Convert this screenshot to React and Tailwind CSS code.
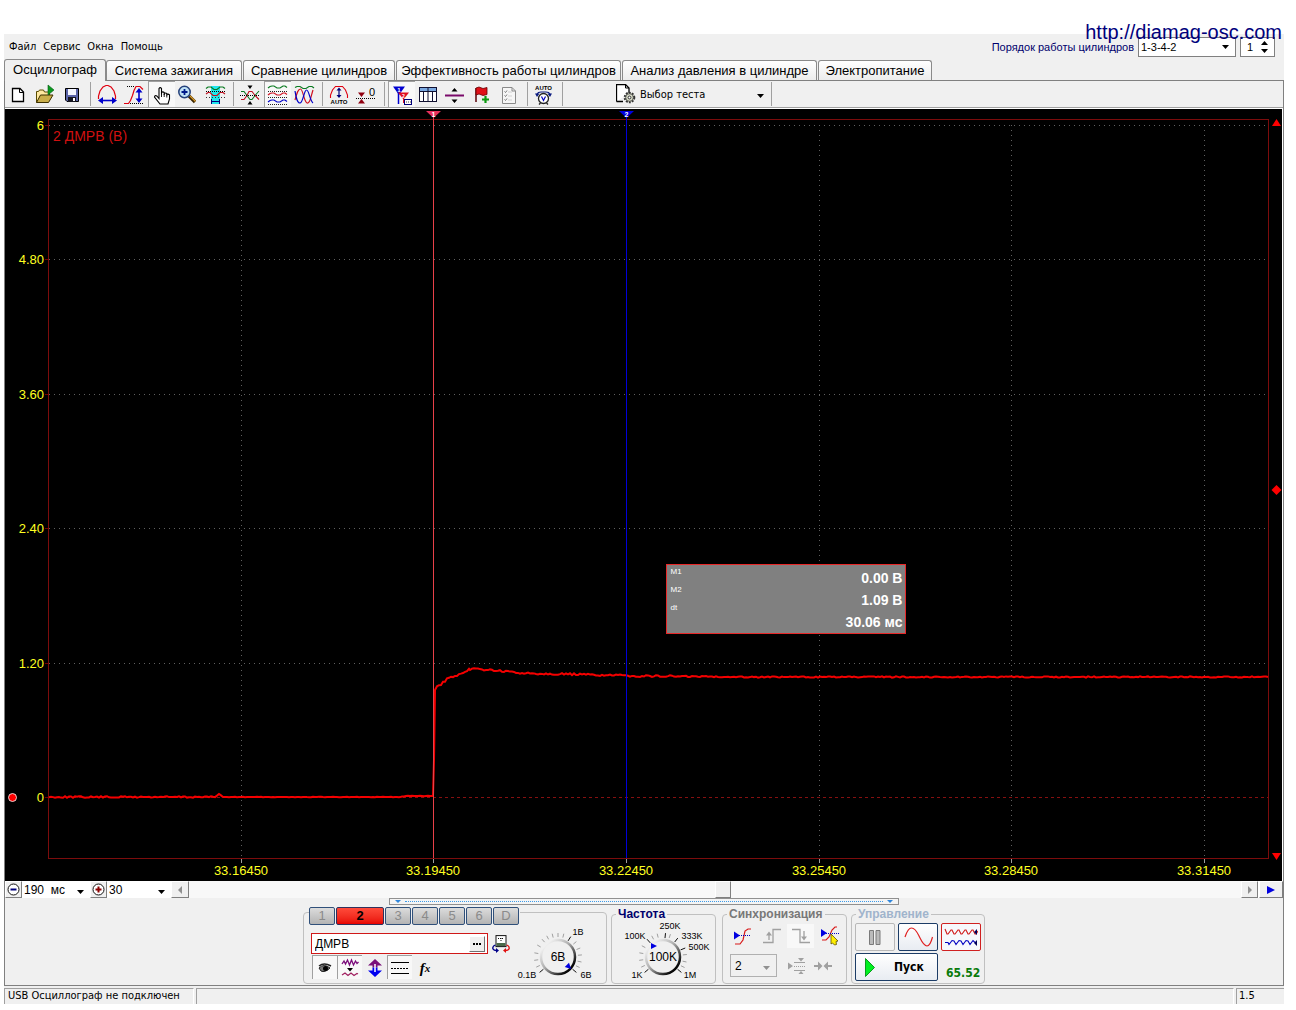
import React from "react";

const cx = (...parts) => parts.filter(Boolean).join(" ");

/* ---------- toolbar glyphs (25 x 24 grid) ---------- */

function Glyph({ children, className = "h-6 w-[25px]", box = "0 0 25 24" }) {
  return (
    <svg className={cx("block shrink-0", className)} viewBox={box} fill="none" aria-hidden="true">
      {children}
    </svg>
  );
}

const NewFile = () => (
  <Glyph>
    <path d="M6.5 5.5h7.500l3.500 3.500v9.500h-11z" fill="#fff" stroke="#000" strokeWidth="1.300" />
    <path d="M13.500 5.500v4h4" stroke="#000" />
  </Glyph>
);

const OpenFile = () => (
  <Glyph>
    <path d="M3.5 19.500V8.500h2l1-1.500h4l1 2h5v3" fill="#ffe9a0" stroke="#5a4a00" />
    <path d="M3.500 19.500l4-7.500h12.500l-4.500 7.500z" fill="#c9ae4a" stroke="#3c3000" />
    <path d="M15 2l6 5-6 5z" fill="#0a9a20" stroke="#065a12" strokeWidth=".6" />
  </Glyph>
);

const SaveFile = () => (
  <Glyph>
    <path d="M5.500 5.500h13v13h-11.500l-1.500-1.500z" fill="#5a64a8" stroke="#000" />
    <rect x="8" y="6" width="8" height="6" fill="#f4f6ff" />
    <rect x="8" y="14" width="8" height="5" fill="#15151f" />
    <rect x="13" y="15" width="2" height="3" fill="#fff" />
  </Glyph>
);

const FitWidth = () => (
  <Glyph>
    <path d="M3.500 16v-3l1.500-5 3-4 3-1.500h2l3 1.500 3 4 1.500 5v3" stroke="#e00010" strokeWidth="1.200" />
    <path d="M6 17.500h13" stroke="#00c" strokeWidth="1.600" />
    <path d="M3 17.500l5-3.500v7zM22 17.500l-5-3.500v7z" fill="#00c" />
  </Glyph>
);

const FitHeight = () => (
  <Glyph>
    <path d="M2 20.500h4.500l2-3 2-5 1.500-5 2-4h4l3 3" stroke="#e00010" strokeWidth="1.200" />
    <path d="M5 3.500h8M8 20.500h13" stroke="#000" strokeDasharray="1 1" />
    <path d="M17 7v11" stroke="#00c" strokeWidth="1.600" />
    <path d="M17 5l-3.500 4.500h7zM17 20l-3.500-4.500h7z" fill="#00c" />
  </Glyph>
);

const Hand = () => (
  <Glyph>
    <path
      d="M10 15.500V5.500q1.200-1.700 2.500 0v6-2q1.200-1.200 2.700 0v2.500-1.500q1.300-1 2.600 0v2-1q1.400-1 2.700.300v4.200l-1.500 5H11l-5.500-7q.3-2 2.300-1z"
      fill="#fff"
      stroke="#000"
      strokeWidth="1.100"
    />
    <path d="M12.500 10v4M15.200 11v3M17.800 12v2.500" stroke="#000" strokeWidth=".9" />
  </Glyph>
);

const Zoom = () => (
  <Glyph>
    <path d="M13 13l6 6" stroke="#3a2500" strokeWidth="3.200" />
    <path d="M14 13l5.500 5.500" stroke="#d89a2a" strokeWidth="1.200" />
    <circle cx="8.500" cy="9" r="5.700" fill="#bfe2f6" stroke="#24407a" strokeWidth="1.500" />
    <path d="M5.500 9h6M8.500 6v6" stroke="#001a8a" strokeWidth="1.800" />
  </Glyph>
);

const CyanZone = () => (
  <Glyph>
    <rect x="8" y="3" width="9" height="18" fill="#1fe6ee" />
    <path d="M3 5.500l2-1.500h3l3 2.500h3L17 4h3l2 1.500" stroke="#0a7a20" strokeWidth="1.200" />
    <path d="M3 11l2-1.500h2l3 3h4l3-3h3l2 1.500" stroke="#c01020" strokeWidth="1.200" />
    <path d="M3 8.500h19" stroke="#000" strokeDasharray="1 1" />
    <path d="M3 14.500h19" stroke="#333" strokeDasharray="1 2" />
    <path d="M8.500 16v5M16.500 16v5M9 18.500h7" stroke="#00007a" />
  </Glyph>
);

const Crossing = () => (
  <Glyph>
    <path d="M9.500 2.500h5L12 6zM9.500 21.500h5L12 18z" fill="#000" />
    <path d="M3 8.500h3l3 4 3 4h2l3-4 4-4.500" stroke="#0a7a20" strokeWidth="1.100" />
    <path d="M3 16.500h3l3-4 2-4h3l3 4 4 4" stroke="#c01020" strokeWidth="1.100" />
    <path d="M2 12.500h20" stroke="#000" strokeDasharray="1 1" />
  </Glyph>
);

const wave = (y) => `M3 ${y + 2}l2-1.500 2-.500h2l3 2h3l3-2h2l2 1.500`;
const ThreeWaves = () => (
  <Glyph>
    <path d={wave(3)} stroke="#0a7a20" strokeWidth="1.200" />
    <path d={wave(10)} stroke="#d01020" strokeWidth="1.200" />
    <path d={wave(17)} stroke="#0000c8" strokeWidth="1.200" />
    <path d="M3 8.500h19M3 14.500h19M3 21.500h19" stroke="#222" strokeDasharray="1 1" />
  </Glyph>
);

const OverlaidWaves = () => (
  <Glyph>
    <path d="M3 4.500l2-1h3l3 2h3l3-2h3l2 1.500" stroke="#0a7a20" strokeWidth="1.200" />
    <path d="M3 17C5 10 6 6 8.500 6S12 19 15 20s4-7 6-13" stroke="#d01020" strokeWidth="1.200" />
    <path d="M3 8c1 6 2 12 5 12S12 7 14.500 7 18 18 21 20" stroke="#0000c8" strokeWidth="1.200" />
  </Glyph>
);

const AutoFit = () => (
  <Glyph>
    <path d="M3.500 15v-3l2-5 3-3.500h7l3 3.500 2 5v3" stroke="#e00010" strokeWidth="1.100" />
    <path d="M12 6v8" stroke="#00007a" strokeWidth="1.200" />
    <path d="M12 4.500L9.500 7.500h5zM12 15l-2.500-3h5z" fill="#00007a" />
    <text x="12" y="21" textAnchor="middle" className="fill-black font-['Liberation_Sans'] text-[6px] font-bold">AUTO</text>
  </Glyph>
);

const ZeroLevel = () => (
  <Glyph>
    <path d="M4 9.500h7l-3.500 4.500zM4 20.500h7L7.500 16z" fill="#900010" />
    <path d="M2 15.500h19" stroke="#000" strokeDasharray="1 1" />
    <text x="18" y="13" textAnchor="middle" className="fill-black font-['Liberation_Sans'] text-[11px]">0</text>
  </Glyph>
);

const Markers = () => (
  <Glyph>
    <path d="M9.500 9v12" stroke="#0000d0" strokeWidth="1.500" />
    <path d="M4 3.500h12L10 12z" fill="#0000d0" />
    <path d="M14.500 14v6" stroke="#e01020" />
    <path d="M9 9.500h11L14.500 16.500z" fill="#e01020" />
    <text x="10" y="9" textAnchor="middle" className="fill-white font-['Liberation_Sans'] text-[6px] font-bold">1</text>
    <text x="14.500" y="14.500" textAnchor="middle" className="fill-white font-['Liberation_Sans'] text-[5px] font-bold">2</text>
    <rect x="15.500" y="16.500" width="7" height="5" fill="#fff" stroke="#00007a" />
    <path d="M17 19h5" stroke="#444" strokeDasharray="1 1" />
  </Glyph>
);

const TableGlyph = () => (
  <Glyph>
    <rect x="3.500" y="4.500" width="17" height="14" fill="#fff" stroke="#101030" />
    <rect x="4" y="5" width="16" height="3.500" fill="#7aa8e0" />
    <path d="M3.500 8.500h17M7.500 8v10.500M12 5v13.500M16.500 8v10.500" stroke="#101030" />
  </Glyph>
);

const SplitLine = () => (
  <Glyph>
    <path d="M2 12.500h19" stroke="#7a0a6a" strokeWidth="2" />
    <path d="M8.500 8.500h6L11.500 5zM8.500 16.500h6l-3 3.500z" fill="#000" />
  </Glyph>
);

const Flag = () => (
  <Glyph>
    <path d="M6 5v14" stroke="#5a0008" strokeWidth="1.500" />
    <path d="M6 5l3-1 4 1.500 4-1v7l-4 1-4-1.500-3 1z" fill="#e01018" stroke="#600" strokeWidth=".8" />
    <path d="M12 16.500h7M15.500 13v7" stroke="#0a9a10" strokeWidth="2.200" />
  </Glyph>
);

const CheckList = () => (
  <Glyph>
    <path d="M5.500 4.500h9.500l3.500 3.500v12.500h-13z" fill="#f6f6f6" stroke="#8a8a8a" />
    <path d="M15 4.500v3.500h3.500" stroke="#8a8a8a" />
    <path d="M7.500 8.500l1 1 1.500-2M7.500 12.500l1 1 1.500-2M7.500 16.500l1 1 1.500-2" stroke="#777" />
    <path d="M11.500 9h4M11.500 13h4M11.500 17h4" stroke="#aaa" strokeDasharray="1 1" />
  </Glyph>
);

const AutoVolt = () => (
  <Glyph>
    <text x="11.500" y="7" textAnchor="middle" className="fill-black font-['Liberation_Sans'] text-[6px] font-bold">AUTO</text>
    <path d="M5 11q1-2 4-2h5q3 0 4 2" stroke="#0a1a80" strokeWidth="1.200" />
    <path d="M3 10.500h4.500L5 14zM15.500 10.500H20L18 14z" fill="#0a1a80" />
    <circle cx="11.500" cy="15.500" r="5" fill="#fff" stroke="#222" strokeWidth="1.300" />
    <path d="M9.500 13.500l2 4 2-4" stroke="#0000c0" strokeWidth="1.200" />
    <path d="M8.500 20l-1.500 1.500M14.500 20l1.500 1.500" stroke="#222" strokeWidth="1.300" />
  </Glyph>
);

const TestGlyph = () => (
  <Glyph className="h-5 w-5" box="0 0 20 20">
    <path d="M.5 17.500V.500h9L13 4v5M.5 17.500H7" fill="#fff" stroke="#000" strokeWidth="1.300" />
    <path d="M9.500.500V4H13" stroke="#000" />
    <circle cx="13.500" cy="13.500" r="4.700" fill="#c8ccb8" stroke="#333" strokeWidth="2.200" strokeDasharray="1.800 1.200" />
    <circle cx="13.500" cy="13.500" r="3.800" fill="#d4d8c4" stroke="#444" strokeWidth=".7" />
    <circle cx="13.500" cy="13.500" r="1.400" fill="#fff" stroke="#333" />
  </Glyph>
);

/* ---------- shared controls ---------- */

function ToolButton({ label, pressed, children }) {
  return (
    <button
      type="button"
      aria-label={label}
      aria-pressed={pressed || undefined}
      className={cx(
        "flex h-[26px] w-[27px] items-center border-t border-l",
        pressed ? "border-[#a0a0a0] bg-[#f8f8f8]" : "border-transparent"
      )}
    >
      {children}
    </button>
  );
}

const Divider = () => (
  <span className="flex h-6 w-2 justify-center">
    <span className="w-px bg-[#a0a0a0]" />
  </span>
);

function Dropdown({ label, value, options = [], className, arrow = "right-1", tone = "fill-black", disabled, height = "h-4" }) {
  return (
    <span className={cx("relative flex items-center", className)}>
      <select
        aria-label={label}
        defaultValue={value}
        disabled={disabled}
        className={cx("w-full cursor-default appearance-none bg-transparent leading-4 text-black outline-none", height)}
      >
        <option>{value}</option>
        {options.map((o) => (
          <option key={o}>{o}</option>
        ))}
      </select>
      <svg className={cx("pointer-events-none absolute top-1/2 h-1 w-[7px]", arrow)} viewBox="0 0 7 4" aria-hidden="true">
        <path d="M0 0h7L3.500 4z" className={tone} />
      </svg>
    </span>
  );
}

/* ---------- header ---------- */

const TABS = [
  ["Осциллограф", "w-[102px]"],
  ["Система зажигания", "w-[136px]"],
  ["Сравнение цилиндров", "w-[152px]"],
  ["Эффективность работы цилиндров", "w-[225px]"],
  ["Анализ давления в цилиндре", "w-[195px]"],
  ["Электропитание", "w-[114px]"],
];

function Header() {
  return (
    <div className="flex h-[25px] items-center justify-between pr-[9px] pl-[5px]">
      <nav className="flex gap-[7px]" aria-label="Меню">
        {["Файл", "Сервис", "Окна", "Помощь"].map((item) => (
          <button key={item} type="button" className="cursor-default">
            {item}
          </button>
        ))}
      </nav>
      <div className="flex items-center font-['Liberation_Sans',sans-serif] text-[#00006c]">
        <label htmlFor="cylinder-order" className="mr-1">
          Порядок работы цилиндров
        </label>
        <span className="relative mr-1 flex h-5 w-[98px] items-center border border-[#808080] bg-white">
          <select id="cylinder-order" className="w-full cursor-default appearance-none bg-transparent pl-[2px] leading-4 text-black outline-none">
            <option>1-3-4-2</option>
            <option>1-2-4-3</option>
          </select>
          <svg className="pointer-events-none absolute right-[6px] h-1 w-[7px]" viewBox="0 0 7 4" aria-hidden="true">
            <path d="M0 0h7L3.500 4z" />
          </svg>
        </span>
        <span className="flex h-5 w-[35px] items-center justify-between border border-[#808080] bg-white pr-[6px] pl-[6px]">
          <input aria-label="Номер цилиндра" defaultValue="1" className="w-3 bg-transparent text-black outline-none" />
          <span className="flex flex-col gap-1">
            <button type="button" aria-label="Больше" className="block">
              <svg className="block h-1 w-[7px]" viewBox="0 0 7 4"><path d="M0 4h7L3.500 0z" /></svg>
            </button>
            <button type="button" aria-label="Меньше" className="block">
              <svg className="block h-1 w-[7px]" viewBox="0 0 7 4"><path d="M0 0h7L3.500 4z" /></svg>
            </button>
          </span>
        </span>
      </div>
    </div>
  );
}

function Tabs() {
  return (
    <div role="tablist" className="flex items-end font-['Liberation_Sans',sans-serif] text-[13px] leading-4">
      {TABS.map(([name, width], i) => (
        <button
          key={name}
          type="button"
          role="tab"
          aria-selected={i === 0}
          className={cx(
            "shrink-0 cursor-default rounded-t-[3px] border border-b-0 border-[#8a8a8a] whitespace-nowrap",
            i === 0 ? "relative -mb-px h-[22px] bg-[#f0f0f0] pb-[2px]" : "mr-px h-5 bg-linear-to-b from-white to-[#ececec]",
            width
          )}
        >
          {name}
        </button>
      ))}
    </div>
  );
}

function Toolbar() {
  return (
    <div role="toolbar" className="flex h-[27px] items-center border-b border-[#a0a0a0]">
      <ToolButton label="Новый"><NewFile /></ToolButton>
      <ToolButton label="Открыть"><OpenFile /></ToolButton>
      <ToolButton label="Сохранить"><SaveFile /></ToolButton>
      <Divider />
      <ToolButton label="По ширине"><FitWidth /></ToolButton>
      <ToolButton label="По высоте"><FitHeight /></ToolButton>
      <ToolButton label="Рука" pressed><Hand /></ToolButton>
      <ToolButton label="Масштаб"><Zoom /></ToolButton>
      <ToolButton label="Участок"><CyanZone /></ToolButton>
      <Divider />
      <ToolButton label="Центр"><Crossing /></ToolButton>
      <ToolButton label="Раздельно" pressed><ThreeWaves /></ToolButton>
      <ToolButton label="Совместно"><OverlaidWaves /></ToolButton>
      <Divider />
      <ToolButton label="Авто"><AutoFit /></ToolButton>
      <ToolButton label="Ноль"><ZeroLevel /></ToolButton>
      <Divider />
      <ToolButton label="Маркеры" pressed><Markers /></ToolButton>
      <ToolButton label="Таблица"><TableGlyph /></ToolButton>
      <ToolButton label="Линия"><SplitLine /></ToolButton>
      <ToolButton label="Флаг"><Flag /></ToolButton>
      <ToolButton label="Список"><CheckList /></ToolButton>
      <Divider />
      <ToolButton label="Автоизмерение"><AutoVolt /></ToolButton>
      <Divider />
      <div className="ml-[50px] flex items-center">
        <TestGlyph />
        <Dropdown label="Тест" value="Выбор теста" className="ml-1 w-[127px]" arrow="right-[3px]" height="h-5 pt-[2px]" />
      </div>
      <Divider />
    </div>
  );
}

/* ---------- oscillogram ---------- */

const Y_TICKS = [["6", 125], ["4.80", 259], ["3.60", 394], ["2.40", 528], ["1.20", 663], ["0", 797]];
const X_TICKS = [["33.16450", 241], ["33.19450", 433], ["33.22450", 626], ["33.25450", 819], ["33.28450", 1011], ["33.31450", 1204]];

const SHAPE = [
  [49, 797], [215, 797], [219, 794], [223, 797], [400, 797], [406, 796], [433, 796], [434, 760], [435, 690],
  [437, 686], [439, 686], [447, 679], [455, 676], [463, 674], [470, 669], [478, 669], [500, 671],
  [520, 673], [560, 674], [600, 675], [640, 676], [760, 677], [1268, 677],
];

function trace() {
  const pts = [];
  let seed = 7;
  for (let i = 0; i < SHAPE.length - 1; i++) {
    const [x0, y0] = SHAPE[i];
    const [x1, y1] = SHAPE[i + 1];
    for (let x = x0; x < x1; x += 2) {
      seed = (seed * 1103515245 + 12345) % 2147483648;
      const r = seed / 2147483648 - 0.5;
      const amp = x < 215 ? 1.6 : x < 433 ? 0.5 : x < 437 ? 0 : x < 680 ? 2 : 1.2;
      pts.push(`${x},${(y0 + ((y1 - y0) * (x - x0)) / (x1 - x0) + r * amp).toFixed(1)}`);
    }
  }
  pts.push("1268,677");
  return pts.join(" ");
}

function Oscillogram() {
  return (
    <div className="relative border-t border-white bg-black">
      <svg className="block w-full font-['Liberation_Sans',sans-serif]" viewBox="5 109 1278 772" role="img" aria-label="Осциллограмма ДМРВ">
        <g stroke="#606060" strokeDasharray="1 4">
          {Y_TICKS.slice(0, 5).map(([t, y]) => <path key={t} d={`M49 ${y + 0.5}H1268`} />)}
          {X_TICKS.filter(([, x]) => x !== 433 && x !== 626).map(([t, x]) => <path key={t} d={`M${x + 0.5} 125V858`} />)}
        </g>
        <path d="M49 797.500H1268" stroke="#861010" strokeDasharray="3 3" />
        <rect x="48.500" y="119.500" width="1220" height="739" fill="none" stroke="#7c0c0c" />
        {X_TICKS.map(([t, x]) => <path key={t} d={`M${x + 0.5} 859v4`} stroke="#a0a0a0" />)}
        {Y_TICKS.map(([t, y]) => <path key={t} d={`M45 ${y + 0.5}h3`} stroke="#700" />)}
        <g fill="#ffff20">
          {Y_TICKS.map(([t, y]) => <text key={t} x="44" y={y + 5} textAnchor="end" className="text-[13px]">{t}</text>)}
          {X_TICKS.map(([t, x]) => <text key={t} x={x} y="875" textAnchor="middle" className="text-[13px]">{t}</text>)}
        </g>
        <text x="53" y="141" fill="#d01010" className="text-[14px]">2 ДМРВ (В)</text>
        <polyline points={trace()} fill="none" stroke="#f40000" strokeWidth="2" />
        <path d="M433.500 117V858" stroke="#e84048" />
        <path d="M626.500 117V858" stroke="#0000d8" />
        <path d="M426 111h15l-7.500 7z" fill="#e8305c" />
        <path d="M619 111h15l-7.500 7z" fill="#0000e0" />
        <text x="433.500" y="117" fill="#fff" textAnchor="middle" className="text-[7px] font-bold">1</text>
        <text x="626.500" y="117" fill="#fff" textAnchor="middle" className="text-[7px] font-bold">2</text>
        <g fill="#f00">
          <path d="M1272 126h9l-4.500-7z" />
          <path d="M1272 853h9l-4.500 7z" />
          <path d="M1276.500 485l5 5-5 5-5-5z" />
        </g>
        <circle cx="12.500" cy="797.500" r="4" fill="#f00" stroke="#fff" strokeWidth=".8" />
        <path d="M1282.500 109v772" stroke="#fff" />
      </svg>
      <dl className="absolute top-[58.900%] left-[51.760%] flex h-[70px] w-[240px] justify-between border border-[#e82828] bg-[#808080] px-[3px] font-['Liberation_Sans',sans-serif] text-white">
        <div className="-mt-[2px] flex flex-col text-[8px] leading-[18px]">
          <dt>M1</dt>
          <dt>M2</dt>
          <dt>dt</dt>
        </div>
        <div className="flex flex-col pt-[2px] text-right text-[14px] leading-[22px] font-bold">
          <dd>0.00 В</dd>
          <dd>1.09 В</dd>
          <dd>30.06 мс</dd>
        </div>
      </dl>
    </div>
  );
}

function ScrollRow() {
  const raised = "flex shrink-0 items-center justify-center border border-t-white border-l-white border-r-[#808080] border-b-[#808080] bg-[#f0f0f0]";
  return (
    <div className="flex h-[17px] items-stretch bg-white font-['Liberation_Sans',sans-serif] text-[12px]">
      <button type="button" aria-label="Уменьшить" className={cx(raised, "w-[17px]")}>
        <svg className="h-[13px] w-[13px]" viewBox="0 0 13 13" fill="none">
          <circle cx="6.500" cy="6.500" r="5.500" fill="#fff" stroke="#111" />
          <path d="M3.500 6.500h6" stroke="#00007c" strokeWidth="2" />
        </svg>
      </button>
      <Dropdown label="Развёртка" value={"190\u00a0\u00a0мс"} className="w-[68px] pl-[2px]" arrow="right-[6px]" />
      <button type="button" aria-label="Увеличить" className={cx(raised, "w-[17px]")}>
        <svg className="h-[13px] w-[13px]" viewBox="0 0 13 13" fill="none">
          <circle cx="6.500" cy="6.500" r="5.500" fill="#fff" stroke="#111" />
          <path d="M3.500 6.500h6M6.500 3.500v6" stroke="#8a0000" strokeWidth="2" />
        </svg>
      </button>
      <Dropdown label="Масштаб" value="30" className="w-[64px] pl-[2px]" arrow="right-[6px]" />
      <button type="button" aria-label="Влево" className={cx(raised, "w-[18px]")}>
        <svg className="h-2 w-1" viewBox="0 0 4 8"><path d="M4 0v8L0 4z" fill="#909090" /></svg>
      </button>
      <div className="flex min-w-0 flex-1 bg-[#f8f8f8]">
        <div className="w-1/2" />
        <button type="button" aria-label="Позиция" className={cx(raised, "w-4")} />
      </div>
      <button type="button" aria-label="Вправо" className={cx(raised, "w-[17px]")}>
        <svg className="h-2 w-1" viewBox="0 0 4 8"><path d="M0 0v8l4-4z" fill="#909090" /></svg>
      </button>
      <button type="button" aria-label="Проиграть" className={cx(raised, "ml-px w-6")}>
        <svg className="h-2 w-2" viewBox="0 0 8 8"><path d="M0 0v8l8-4z" fill="#0000e0" /></svg>
      </button>
    </div>
  );
}

function Splitter() {
  return (
    <div className="mx-auto flex h-[7px] w-[510px] items-center gap-1 border border-[#909090] bg-[#f4f4f4] px-[5px]">
      <svg className="h-[3px] w-[6px]" viewBox="0 0 6 3"><path d="M0 0h6L3 3z" fill="#2f86dc" /></svg>
      <span className="flex-1 border-t border-dotted border-[#3c9ae8]" />
      <svg className="h-[3px] w-[6px]" viewBox="0 0 6 3"><path d="M0 0h6L3 3z" fill="#2f86dc" /></svg>
    </div>
  );
}

/* ---------- control groups ---------- */

function Knob({ value, labels, ticks, marks, pointer, label, box, className }) {
  const at = (deg, r) => {
    const a = (deg * Math.PI) / 180;
    return [(Math.sin(a) * r).toFixed(2), (-Math.cos(a) * r).toFixed(2)];
  };
  const ray = (deg, r0, r1) => `M${at(deg, r0).join(" ")}L${at(deg, r1).join(" ")}`;
  return (
    <svg className={cx("block shrink-0 font-['Liberation_Sans',sans-serif]", className)} viewBox={box} role="img" aria-label={label}>
      <defs>
        <linearGradient id={`rim-${value}`} x1="0" y1="0" x2="1" y2="1">
          <stop offset=".15" stopColor="#f0f0f0" />
          <stop offset=".45" stopColor="#b0b0b0" />
          <stop offset=".85" stopColor="#050505" />
        </linearGradient>
      </defs>
      {ticks.map((d) => <path key={d} d={ray(d, 20, 24)} stroke="#a0a0a0" />)}
      {marks.map((d) => <path key={d} d={ray(d, 19, 24)} stroke="#111" />)}
      <circle r="17" fill="#f0f0f0" stroke={`url(#rim-${value})`} strokeWidth="2.500" />
      <path d="M-3-3L3 0l-6 3z" fill="#0000e0" transform={pointer} />
      <text y="4" textAnchor="middle" className="text-[12px]">{value}</text>
      {labels.map(([t, x, y]) => (
        <text key={t} x={x} y={y} textAnchor="middle" className="text-[9px]">{t}</text>
      ))}
    </svg>
  );
}

function Group({ title, tone, className, children }) {
  return (
    <fieldset className={cx("h-[75px] min-w-0 rounded-[4px] border border-[#c0c0c0]", className)}>
      <legend className={cx("ml-1 px-[2px] font-['Liberation_Sans',sans-serif] text-[12px] leading-[10px] font-bold", tone)}>{title}</legend>
      {children}
    </fieldset>
  );
}

const CHANNELS = ["1", "2", "3", "4", "5", "6", "D"];

function ChannelPanel() {
  const small = "flex h-6 w-[25px] items-center justify-center border-t border-l";
  return (
    <section aria-label="Канал" className="mr-1 flex h-[72px] w-[304px] rounded-[4px] border border-[#c0c0c0]">
      <div className="flex w-[216px] shrink-0 flex-col pl-[5px]">
        <div className="-mt-[6px] flex gap-px bg-[#f0f0f0] font-['Liberation_Sans',sans-serif] text-[13px] leading-4">
          {CHANNELS.map((c) => (
            <button
              key={c}
              type="button"
              aria-pressed={c === "2"}
              className={cx(
                "h-[18px] shrink-0 rounded-[2px] border",
                c === "2"
                  ? "w-12 border-[#30305a] bg-linear-to-b from-[#ff4a3a] to-[#e80000] font-bold text-black"
                  : "w-[26px] border-[#30507a] bg-linear-to-b from-[#dcdcdc] to-[#b4b4b4] text-[#8a8a8a]"
              )}
            >
              {c}
            </button>
          ))}
        </div>
        <div className="mt-2 ml-[2px] flex items-center">
          <div className="flex h-[21px] w-[177px] items-center border border-[#d01818] bg-white pr-[2px] pl-[3px] font-['Liberation_Sans',sans-serif] text-[12px]">
            <input aria-label="Название канала" defaultValue="ДМРВ" className="min-w-0 flex-1 bg-transparent outline-none" />
            <button type="button" aria-label="Выбрать" className="flex h-4 w-4 items-center justify-center gap-px border border-t-white border-l-white border-r-[#707070] border-b-[#707070] bg-[#f0f0f0]">
              <span className="size-[2px] bg-black" />
              <span className="size-[2px] bg-black" />
              <span className="size-[2px] bg-black" />
            </button>
          </div>
          <button type="button" aria-label="Прибор" className="ml-1">
            <Glyph className="h-[18px] w-[18px]" box="0 0 18 18">
              <rect x="4" y=".6" width="10" height="11" fill="#fff" stroke="#111" />
              <rect x="4.500" y="8" width="9" height="3" fill="#4a6a4a" />
              <path d="M9 6V3M6 3.500h6" stroke="#111" strokeDasharray="1 1" />
              <path d="M3.500 10Q.5 11 .8 13.500 1.500 15.500 4.500 15.500" stroke="#00008a" strokeWidth="1.300" />
              <path d="M4 13v5l3-2.500z" fill="#00008a" />
              <path d="M14.500 10q3 1 2.700 3.500-.7 2-3.700 2" stroke="#e01010" strokeWidth="1.300" />
              <path d="M14 13v5l-3-2.500z" fill="#e01010" />
            </Glyph>
          </button>
        </div>
        <div className="mt-px ml-[3px] flex">
          <button type="button" aria-label="Видимость" className={cx(small, "border-[#a0a0a0] bg-[#f8f8f8]")}>
            <Glyph className="h-3 w-[14px]" box="0 0 14 12">
              <path d="M1 6q5-5 11 0-5 5-9 3z" fill="#777" stroke="#222" />
              <circle cx="7.500" cy="6.500" r="2.500" fill="#000" />
              <path d="M1 4q5-4 12 0" stroke="#222" strokeWidth="1.500" />
            </Glyph>
          </button>
          <button type="button" aria-label="Фильтр" className={cx(small, "border-[#a0a0a0] bg-[#f8f8f8]")}>
            <Glyph className="h-5 w-[18px]" box="0 0 18 20">
              <path d="M1 6l2-3 1.500 3L6.500 2l2 5 2-5 2 5 2-4 1.500 2.500 1.500-1.500" stroke="#7a0a7a" strokeWidth="1.300" />
              <path d="M6 10h6l-3 3.500z" fill="#000" />
              <path d="M1 17l3-2 3 2.500 3-2.500 3 2.500 3-2 1 .500" stroke="#a02060" strokeWidth="1.200" />
            </Glyph>
          </button>
          <button type="button" aria-label="Сдвиг" className={cx(small, "border-transparent")}>
            <Glyph className="h-[18px] w-[14px]" box="0 0 14 18">
              <path d="M7 0l7 6.500h-4.500v2h-5v-2H0z" fill="#7a107a" />
              <path d="M7 18l7-6.500h-4.500v-3h-5v3H0z" fill="#0000f0" />
              <path d="M7 5v8" stroke="#fff" strokeWidth="1.500" />
            </Glyph>
          </button>
          <button type="button" aria-label="Уровни" className={cx(small, "border-[#a0a0a0] bg-[#f8f8f8]")}>
            <Glyph className="h-[14px] w-[18px]" box="0 0 18 14">
              <path d="M0 1.500h18M0 12.500h18" stroke="#000" />
              <path d="M0 7.500h18" stroke="#000" strokeDasharray="2 1" />
            </Glyph>
          </button>
          <button type="button" aria-label="Функция" className={cx(small, "border-transparent font-['Liberation_Serif',serif] text-[15px] leading-4 font-bold italic")}>
            f<span className="text-[11px]">x</span>
          </button>
        </div>
      </div>
      <div className="flex flex-1 items-end">
        <Knob
          label="Диапазон"
          value="6В"
          box="-42 -34 84 60"
          className="-ml-1 h-[60px] w-[84px]"
          labels={[["1В", 20, -22], ["6В", 28, 21], ["0.1В", -31, 21]]}
          ticks={[-115, -98, -80, -60, -42, -28, -14, 0, 14, 50, 68, 85, 102, 116]}
          marks={[-130, 32, 130]}
          pointer="translate(11 10) rotate(45)"
        />
      </div>
    </section>
  );
}

function FrequencyPanel() {
  return (
    <Group title="Частота" tone="text-[#00006c]" className="mr-[6px] w-[105px]">
      <Knob
        label="Частота"
        value="100K"
        box="-49 -38 100 64"
        className="mx-auto h-16 w-[100px]"
        labels={[["100K", -28, -18], ["250K", 7, -28], ["333K", 29, -18], ["500K", 36, -7], ["1M", 27, 21], ["1K", -26, 21]]}
        ticks={[-115, -98, -80, -62, -28, -14, 18, 84, 102, 116]}
        marks={[-130, -42, 6, 38, 68, 130]}
        pointer="translate(-9 -11)"
      />
    </Group>
  );
}

function SyncPanel() {
  const cell = "flex h-6 w-[27px] items-center justify-center";
  return (
    <Group title="Синхронизация" tone="text-[#787878]" className="mr-1 w-[125px]">
      <div className="flex gap-[2px] pt-[5px] pl-[6px]">
        <button type="button" aria-label="Синхронизация по уровню" className={cell}>
          <Glyph className="h-5 w-5" box="0 0 20 20">
            <path d="M2 18h5l3-4 2-9 3-2h3" stroke="#d81818" strokeWidth="1.200" />
            <path d="M2 9.500h16" stroke="#0000c0" strokeDasharray="1 1" />
            <path d="M1 5.500v8l6-4z" fill="#0000e0" />
          </Glyph>
        </button>
        <button type="button" aria-label="Фронт" className={cell} disabled>
          <Glyph className="h-4 w-[18px]" box="0 0 18 16">
            <path d="M0 14.500h10V1.500h8M6 12V5" stroke="#a0a0a0" strokeWidth="1.300" />
            <path d="M3 7.500h6L6 3.500z" fill="#a0a0a0" />
          </Glyph>
        </button>
        <button type="button" aria-label="Спад" className={cx(cell, "bg-[#f8f8f8]")} disabled>
          <Glyph className="h-4 w-[18px]" box="0 0 18 16">
            <path d="M0 1.500h8v13h10M12 3v8" stroke="#a0a0a0" strokeWidth="1.300" />
            <path d="M9 8.500h6l-3 4z" fill="#a0a0a0" />
          </Glyph>
        </button>
        <button type="button" aria-label="Указать уровень" className={cell}>
          <Glyph className="h-5 w-5" box="0 0 20 20">
            <path d="M2 14h4l3-3 3-7 3-3h2" stroke="#d81818" strokeWidth="1.200" />
            <path d="M2 7.500h17" stroke="#0000c0" strokeDasharray="1 1" />
            <path d="M1 3v8l6-4z" fill="#0000e0" />
            <path d="M11 8l7 7-2 .5.500 3-2 .5-2-2-1.500 1z" fill="#ffee00" stroke="#5a5000" strokeWidth=".8" />
          </Glyph>
        </button>
      </div>
      <div className="flex items-center pt-[6px] pl-[7px]">
        <Dropdown label="Канал синхронизации" value="2" disabled className="mr-[11px] h-[23px] w-[47px] border border-[#b0b0b0] pl-1 font-['Liberation_Sans',sans-serif] text-[12px]" arrow="right-[6px]" tone="fill-[#909090]" />
        <Glyph className="mr-2 h-4 w-[18px]" box="0 0 18 16">
          <path d="M6 4.500h11M6 12.500h11" stroke="#a0a0a0" />
          <path d="M6 8.500h11" stroke="#a0a0a0" strokeDasharray="1 1" />
          <path d="M0 4.500v7l5-3.500zM10 0h6l-3 3.500zM10 16.500h6l-3-3.500z" fill="#a0a0a0" />
        </Glyph>
        <Glyph className="h-3 w-[18px]" box="0 0 18 12">
          <path d="M0 6h5M13 6h5" stroke="#a0a0a0" strokeWidth="2" />
          <path d="M4 1.500v9L8.500 6zM14 1.500v9L9.500 6z" fill="#a0a0a0" />
        </Glyph>
      </div>
    </Group>
  );
}

function ControlPanel() {
  const btn = "flex h-7 w-10 items-center justify-center rounded-[2px] border";
  return (
    <Group title="Управление" tone="text-[#a0b4cc]" className="w-[134px]">
      <div className="flex gap-[3px] pt-1 pl-[3px]">
        <button type="button" aria-label="Пауза" disabled className={cx(btn, "border-[#b8b8b8] bg-[#f2f2f2]")}>
          <Glyph className="h-[15px] w-3" box="0 0 12 15">
            <path d="M.5.500h4v14h-4zM7 .500h4v14h-4z" fill="#bbb" stroke="#7a7a7a" />
          </Glyph>
        </button>
        <button type="button" aria-label="Одиночный запуск" className={cx(btn, "border-[#1c3c66] bg-linear-to-b from-white to-[#e8ecf2]")}>
          <Glyph className="h-5 w-[29px]" box="0 0 29 20">
            <path d="M1 10C3 4 5 1 7.500 1c4 0 6 5 8 9s4 9 7.500 9c2.500 0 4-3 5.500-9" stroke="#e02020" strokeWidth="1.200" />
          </Glyph>
        </button>
        <button type="button" aria-label="Непрерывный режим" className={cx(btn, "border-[#d02020] bg-[#f6f8fc]")}>
          <Glyph className="h-[18px] w-[34px]" box="0 0 34 18">
            <path d="M1 1l2 5h1l3-4 1 0 2 4h1l3-4 1 0 2 4h1l3-4 1 0 2 4h1l3-4 1 0 2 4h1l2-3" stroke="#d01818" strokeWidth="1.100" />
            <path d="M1 14.500h3l1 2 3-4 2 .5 2 3.500 3-4 2 .5 2 3.500 3-4 2 .5 2 3.500 3-4 2 2" stroke="#0000c0" strokeWidth="1.100" />
            <path d="M33 1v6l-3-3zM33 12v6l-3-3z" fill="#00005a" />
          </Glyph>
        </button>
      </div>
      <div className="flex items-center pt-[2px] pl-[3px]">
        <button type="button" className="flex h-7 w-[83px] items-center rounded-[2px] border border-[#1c3c66] bg-linear-to-b from-white to-[#e8ecf2] pl-[9px] text-[12px] font-bold">
          <svg className="mr-[19px] h-[19px] w-[10px]" viewBox="0 0 10 19" aria-hidden="true">
            <path d="M.5.500v18l9-9z" fill="#00f020" stroke="#0a9a20" />
          </svg>
          Пуск
        </button>
        <output className="ml-2 pt-3 text-[12px] leading-4 font-bold text-[#0a7a0a]">65.52</output>
      </div>
    </Group>
  );
}

export default function App() {
  return (
    <div className="relative min-h-screen bg-white pt-[34px] pr-3 pb-[5px] pl-1 font-['DejaVu_Sans_Condensed','DejaVu_Sans',sans-serif] text-[11px] leading-[14px] text-black">
      <div className="bg-[#f0f0f0]">
        <Header />
        <Tabs />
        <main className="border border-[#808080]">
          <Toolbar />
          <Oscillogram />
          <ScrollRow />
          <Splitter />
          <div className="flex items-end justify-center pt-1 pb-px">
            <ChannelPanel />
            <FrequencyPanel />
            <SyncPanel />
            <ControlPanel />
          </div>
        </main>
        <footer className="flex gap-[2px] pt-[2px]">
          <p className="h-4 w-[190px] border-t border-r border-l border-[#a0a0a0] border-r-white pl-[3px]">USB Осциллограф не подключен</p>
          <p className="h-4 flex-1 border-t border-r border-l border-[#a0a0a0] border-r-white" />
          <p className="h-4 w-12 border-t border-l border-[#a0a0a0] pl-[2px]">1.5</p>
        </footer>
      </div>
      <a href="http://diamag-osc.com" className="absolute top-5 right-[14px] font-['Liberation_Sans',sans-serif] text-[20px] leading-6 text-[#00007c]">
        http://diamag-osc.com
      </a>
    </div>
  );
}
